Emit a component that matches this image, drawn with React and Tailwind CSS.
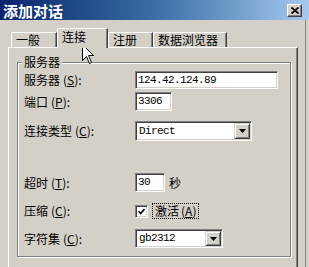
import React from "react";

const font = { fontFamily: '"Noto Sans CJK SC", "Liberation Sans", sans-serif' };
const mono = { fontFamily: '"Liberation Mono", "Noto Sans CJK SC", monospace' };

function Label({ text, hot }) {
  return (
    <div className="w-[111px] text-[12px] leading-none text-black whitespace-nowrap">
      {text}
      <span className="ml-[3px]">
        (<span className="underline">{hot}</span>):
      </span>
    </div>
  );
}

function TextBox({ value, w, h }) {
  return (
    <div
      className={`${w} ${h} bg-white border border-t-[#808080] border-l-[#808080] border-b-white border-r-white shadow-[inset_1px_1px_0_#404040,inset_-1px_-1px_0_#d4d0c8] flex items-center pl-[2px] text-[11px] tracking-[-0.6px] text-black`}
      style={mono}
    >
      {value}
    </div>
  );
}

function ArrowButton({ h }) {
  return (
    <div
      className={`w-[16px] ${h} bg-[#d4d0c8] border border-t-[#d4d0c8] border-l-[#d4d0c8] border-b-[#404040] border-r-[#404040] shadow-[inset_1px_1px_0_#ffffff,inset_-1px_-1px_0_#808080] flex items-center justify-center`}
    >
      <svg width="7" height="4" viewBox="0 0 7 4">
        <path d="M0 0H7L3.5 4Z" fill="#000" />
      </svg>
    </div>
  );
}

function Select({ value, w, h, bh }) {
  return (
    <div
      className={`${w} ${h} bg-white border border-t-[#808080] border-l-[#808080] border-b-white border-r-white shadow-[inset_1px_1px_0_#404040,inset_-1px_-1px_0_#d4d0c8] flex items-center justify-between p-[1px] text-[11px] tracking-[-0.6px] text-black`}
      style={mono}
    >
      <span className="pl-[2px]">{value}</span>
      <ArrowButton h={bh} />
    </div>
  );
}

function Tab({ label, selected, w }) {
  if (selected) {
    return (
      <div className={`${w} h-[20px] -mb-px relative z-10 bg-[#d4d0c8] border-l border-t border-r border-l-white border-t-white border-r-[#404040] rounded-tl-[2px] shadow-[inset_-1px_0_0_#808080] pl-[4px] pt-[2px] text-[12px] leading-none text-black`}>
        {label}
      </div>
    );
  }
  return (
    <div className={`${w} h-[15px] bg-[#d4d0c8] border-l border-t border-r border-l-white border-t-white border-r-[#404040] rounded-tl-[2px] shadow-[inset_-1px_0_0_#808080] pl-[4px] pt-[1px] text-[12px] leading-none text-black`}>
      {label}
    </div>
  );
}

export default function App() {
  return (
    <div className="w-[309px] h-[267px] overflow-hidden bg-[#d4d0c8] relative" style={font}>
      {/* title bar */}
      <div className="h-[20px] flex items-center justify-between bg-gradient-to-r from-[#0a246a] via-[#3a6ea5] to-[#a6caf0] pl-[3px] pr-[7px]">
        <span className="text-white font-bold text-[15px] leading-none">添加对话</span>
        <div className="w-[15px] h-[13px] bg-[#d4d0c8] border border-t-white border-l-white border-b-[#404040] border-r-[#404040] shadow-[inset_-1px_-1px_0_#808080] flex items-center justify-center">
          <svg width="8" height="7" viewBox="0 0 8 7">
            <path d="M0.5 0.5L7.5 6.5M7.5 0.5L0.5 6.5" stroke="#000" strokeWidth="1.8" />
          </svg>
        </div>
      </div>

      <div className="w-[306px] h-[247px] border-r border-r-[#808080]">
        <div className="ml-[8px] w-[290px]">
          {/* tabs */}
          <div className="h-[27px] flex items-end pl-[3px]">
            <Tab label="一般" w="w-[46px]" />
            <Tab label="连接" w="w-[51px]" selected />
            <Tab label="注册" w="w-[45px]" />
            <Tab label="数据浏览器" w="w-[74px]" />
          </div>

          {/* panel */}
          <div className="h-[221px] border-l border-t border-r border-l-white border-t-white border-r-[#404040] shadow-[inset_-1px_0_0_#808080] pt-[14px] pl-[8px]">
            <div className="relative w-[274px] h-[195px] border border-[#808080] shadow-[inset_1px_1px_0_#ffffff,1px_1px_0_#ffffff] pl-[6px] pt-[8px]">
              <span className="absolute left-[4px] -top-[8px] px-[2px] bg-[#d4d0c8] text-[12px] leading-[14px] text-black">
                服务器
              </span>

              <div className="flex items-center h-[18px]">
                <Label text="服务器" hot="S" />
                <TextBox value="124.42.124.89" w="w-[143px]" h="h-[18px]" />
              </div>
              <div className="flex items-center h-[19px] mt-[3px]">
                <Label text="端口" hot="P" />
                <TextBox value="3306" w="w-[37px]" h="h-[19px]" />
              </div>
              <div className="flex items-center h-[20px] mt-[10px]">
                <Label text="连接类型" hot="C" />
                <Select value="Direct" w="w-[117px]" h="h-[20px]" bh="h-[16px]" />
              </div>
              <div className="flex items-center h-[19px] mt-[32px]">
                <Label text="超时" hot="T" />
                <TextBox value="30" w="w-[30px]" h="h-[19px]" />
                <span className="ml-[4px] text-[12px] leading-none text-black">秒</span>
              </div>
              <div className="flex items-center h-[16px] mt-[11px]">
                <Label text="压缩" hot="C" />
                <div className="w-[13px] h-[13px] bg-white border border-t-[#808080] border-l-[#808080] border-b-white border-r-white shadow-[inset_1px_1px_0_#404040,inset_-1px_-1px_0_#d4d0c8] flex items-center justify-center">
                  <svg width="7" height="7" viewBox="0 0 7 7">
                    <path d="M0.5 3.2L2.6 5.5L6.5 1" stroke="#000" strokeWidth="1.6" fill="none" />
                  </svg>
                </div>
                <span className="ml-[4px] h-[16px] flex items-center px-[2px] border border-dotted border-black text-[12px] leading-none text-black whitespace-nowrap">
                  激活<span className="ml-[2px]">(<span className="underline">A</span>)</span>
                </span>
              </div>
              <div className="flex items-center h-[19px] mt-[10px]">
                <Label text="字符集" hot="C" />
                <Select value="gb2312" w="w-[88px]" h="h-[19px]" bh="h-[15px]" />
              </div>
            </div>
          </div>
        </div>
      </div>

      {/* mouse pointer */}
      <svg className="absolute left-[82px] top-[44px]" width="13" height="21" viewBox="0 0 13 21">
        <path
          d="M0.5 0.5V16.5L4.5 12.5L7.5 19.5L9.5 18.5L6.5 11.5H11.5Z"
          fill="#fff"
          stroke="#000"
          strokeWidth="1"
          strokeLinejoin="miter"
        />
      </svg>
    </div>
  );
}
